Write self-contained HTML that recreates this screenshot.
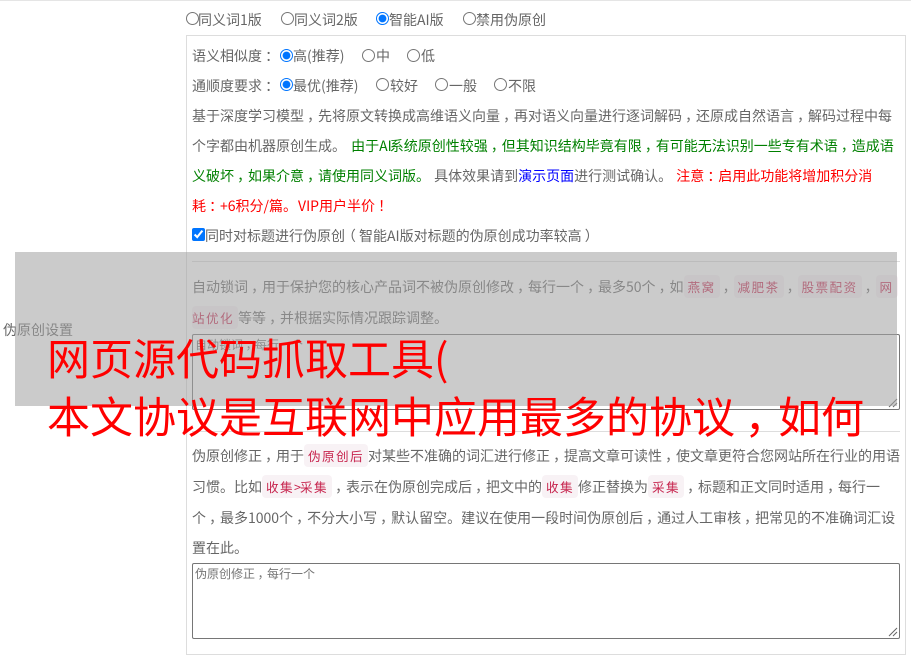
<!DOCTYPE html>
<html><head><meta charset="utf-8">
<style>
html,body{margin:0;padding:0;background:#fff;}
body{width:911px;height:658px;overflow:hidden;position:relative;font:14px/20px "Noto Sans CJK SC","Liberation Sans",sans-serif;color:#666;}
i{font-style:normal;position:relative;left:.22em;}
i.o{left:-.22em}
.l{position:absolute;white-space:nowrap;height:20px;line-height:20px;word-spacing:1px;}
.b{position:absolute;background:#ddd;}
input{position:absolute;margin:0;width:13px;height:13px;accent-color:#0075ff;}
code{font:inherit;font-size:12.6px;background:#f8f2f5;color:#c7254e;border-radius:4px;padding:2px 4px;letter-spacing:1.4px;}
.g{color:green}.r{color:red}.bl{color:#00f}
.ta{position:absolute;box-sizing:border-box;border:1px solid #767676;border-radius:2px;background:#fff;font-size:12px;line-height:16px;color:#757575;padding:2px;}
.grip{position:absolute;right:1px;bottom:1px;}
.ov{position:absolute;left:15px;top:252px;width:882px;height:154px;background:rgba(162,162,162,.56);}
.t{position:absolute;left:47px;white-space:nowrap;color:red;font-size:43px;line-height:58px;height:58px;}
</style></head><body>
<div class="b" style="left:0;top:0;width:911px;height:1px;background:#e5e5e5"></div>

<input type="radio" style="left:186px;top:12px"><span class="l" style="left:198px;top:10px">同义词1版</span>
<input type="radio" style="left:281px;top:12px"><span class="l" style="left:294px;top:10px">同义词2版</span>
<input type="radio" checked style="left:376px;top:12px"><span class="l" style="left:389px;top:10px">智能AI版</span>
<input type="radio" style="left:463px;top:12px"><span class="l" style="left:476px;top:10px">禁用伪原创</span>

<div class="b" style="left:186px;top:35px;width:720px;height:1px"></div>
<div class="b" style="left:186px;top:35px;width:1px;height:620px"></div>
<div class="b" style="left:905px;top:35px;width:1px;height:620px"></div>
<div class="b" style="left:186px;top:654px;width:720px;height:1px"></div>

<span class="l" style="left:192px;top:46px">语义相似度<i>：</i></span>
<input type="radio" checked style="left:280px;top:49px"><span class="l" style="left:293px;top:46px">高(推荐)</span>
<input type="radio" style="left:362px;top:49px"><span class="l" style="left:376px;top:46px">中</span>
<input type="radio" style="left:407px;top:49px"><span class="l" style="left:421px;top:46px">低</span>

<span class="l" style="left:192px;top:76px">通顺度要求<i>：</i></span>
<input type="radio" checked style="left:280px;top:78px"><span class="l" style="left:293px;top:76px">最优(推荐)</span>
<input type="radio" style="left:376px;top:78px"><span class="l" style="left:390px;top:76px">较好</span>
<input type="radio" style="left:435px;top:78px"><span class="l" style="left:449px;top:76px">一般</span>
<input type="radio" style="left:494px;top:78px"><span class="l" style="left:508px;top:76px">不限</span>

<span class="l" style="left:192px;top:106px">基于深度学习模型<i>，</i>先将原文转换成高维语义向量<i>，</i>再对语义向量进行逐词解码<i>，</i>还原成自然语言<i>，</i>解码过程中每</span>
<span class="l" style="left:192px;top:136px">个字都由机器原创生成。 <span class="g" style="margin-left:1px">由于<span style="margin-right:-2px">AI</span>系统原创性较强<i>，</i>但其知识结构毕竟有限<i>，</i>有可能无法识别一些专有术语<i>，</i>造成语</span></span>
<span class="l" style="left:192px;top:166px"><span class="g">义破坏<i>，</i>如果介意<i>，</i>请使用同义词版。</span> 具体效果请到<span class="bl">演示页面</span>进行测试确认。 <span class="r">注意<i>：</i>启用此功能将增加积分消</span></span>
<span class="l r" style="left:192px;top:196px">耗<i>：</i>+6积分/篇。<span style="margin-left:1px">VIP</span>用户半价<i>！</i></span>
<input type="checkbox" checked style="left:192px;top:228px"><span class="l" style="left:205px;top:226px">同时对标题进行伪原创<i class="o">（</i>智能AI版对标题的伪原创成功率较高<i>）</i></span>

<div class="b" style="left:192px;top:261px;width:708px;height:1px"></div>

<span class="l" style="left:192px;top:277px">自动锁词<i>，</i>用于保护您的核心产品词不被伪原创修改<i>，</i>每行一个<i>，</i>最多50个<i>，</i>如<code>燕窝</code><i>，</i><code>减肥茶</code><i>，</i><code>股票配资</code><i>，</i><code>网</code></span>
<span class="l" style="left:192px;top:308px"><code style="padding-left:0">站优化</code>等等<i>，</i>并根据实际情况跟踪调整。</span>
<div class="ta" style="left:192px;top:334px;width:708px;height:76px">自动锁词<i>，</i>每行一个
<svg class="grip" width="10" height="10" viewBox="0 0 10 10"><path d="M1 9L9 1M5 9L9 5" stroke="#666" fill="none"/></svg></div>

<div class="b" style="left:192px;top:431px;width:708px;height:1px"></div>

<span class="l" style="left:192px;top:446px">伪原创修正<i>，</i>用于<code>伪原创后</code>对某些不准确的词汇进行修正<i>，</i>提高文章可读性<i>，</i>使文章更符合您网站所在行业的用语</span>
<span class="l" style="left:192px;top:477px">习惯。比如<code>收集<span style="letter-spacing:0;margin-right:-1px">&gt;</span>采集</code><i>，</i>表示在伪原创完成后<i>，</i>把文中的<code>收集</code>修正替换为<code>采集</code><i>，</i>标题和正文同时适用<i>，</i>每行一</span>
<span class="l" style="left:192px;top:508px">个<i>，</i>最多1000个<i>，</i>不分大小写<i>，</i>默认留空。建议在使用一段时间伪原创后<i>，</i>通过人工审核<i>，</i>把常见的不准确词汇设</span>
<span class="l" style="left:192px;top:538px">置在此。</span>
<div class="ta" style="left:192px;top:563px;width:708px;height:76px">伪原创修正<i>，</i>每行一个
<svg class="grip" width="10" height="10" viewBox="0 0 10 10"><path d="M1 9L9 1M5 9L9 5" stroke="#666" fill="none"/></svg></div>

<span class="l" style="left:3px;top:320px">伪原创设置</span>
<div class="ov"></div>
<div class="t" style="top:328px">网页源代码抓取工具(</div>
<div class="t" style="top:386px">本文协议是互联网中应用最多的协议<i>，</i>如何</div>
</body></html>
